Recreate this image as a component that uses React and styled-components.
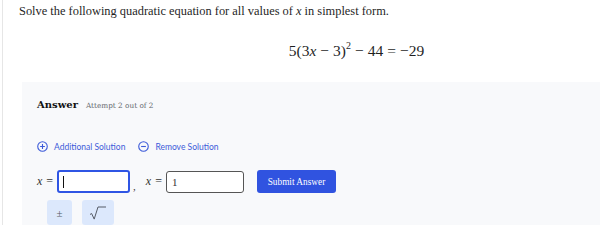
import styled, { createGlobalStyle } from "styled-components";

const GlobalStyle = createGlobalStyle`
  html, body {
    margin: 0;
    padding: 0;
    background: #ffffff;
    overflow: hidden;
  }
`;

function PlusCircle() {
  return (
    <svg width="11" height="11" viewBox="0 0 12 12" fill="none">
      <circle cx="6" cy="6" r="5.2" stroke="#3d5bd9" strokeWidth="1.2" />
      <path d="M6 3.4v5.2M3.4 6h5.2" stroke="#3d5bd9" strokeWidth="1.2" />
    </svg>
  );
}

function MinusCircle() {
  return (
    <svg width="11" height="11" viewBox="0 0 12 12" fill="none">
      <circle cx="6" cy="6" r="5.2" stroke="#3d5bd9" strokeWidth="1.2" />
      <path d="M3.4 6h5.2" stroke="#3d5bd9" strokeWidth="1.2" />
    </svg>
  );
}

function SqrtIcon() {
  return (
    <svg width="18" height="14" viewBox="0 0 18 14" fill="none">
      <path d="M1 8.5l1.6-1 2.6 5.6L9 1h8" stroke="#555b66" strokeWidth="1" />
    </svg>
  );
}

export default function App() {
  return (
    <>
      <GlobalStyle />
      <Page>
        <Question>
          Solve the following quadratic equation for all values of <MathVar>x</MathVar> in simplest form.
        </Question>
        <Equation>
          5(3<MathVar>x</MathVar>
          <Op>−</Op>3)<Sup>2</Sup>
          <Op>−</Op>44<Op>=</Op>−29
        </Equation>
        <Panel>
          <AnswerHead>
            <AnswerTitle>Answer</AnswerTitle>
            <Attempt>Attempt 2 out of 2</Attempt>
          </AnswerHead>
          <Actions>
            <ActionLink>
              <PlusCircle />
              Additional Solution
            </ActionLink>
            <ActionLink>
              <MinusCircle />
              Remove Solution
            </ActionLink>
          </Actions>
          <InputRow>
            <Field>
              <MathLabel><MathVar>x</MathVar><Eq>=</Eq></MathLabel>
              <AnswerBox focused>
                <Caret />
              </AnswerBox>
            </Field>
            <Comma>,</Comma>
            <Field>
              <MathLabel><MathVar>x</MathVar><Eq>=</Eq></MathLabel>
              <AnswerBox>1</AnswerBox>
            </Field>
            <SubmitButton>Submit Answer</SubmitButton>
          </InputRow>
          <KeyRow>
            <KeyButton width="25px">±</KeyButton>
            <KeyButton width="32px"><SqrtIcon /></KeyButton>
          </KeyRow>
        </Panel>
      </Page>
    </>
  );
}

const Page = styled.div`
  margin-left: 2px;
  height: 225px;
  border-left: 1px solid #e6e6e6;
  display: flex;
  flex-direction: column;
  overflow: hidden;
`;

const Question = styled.div`
  padding: 3px 0 0 16px;
  font-family: "Liberation Serif", "Times New Roman", serif;
  font-size: 12.4px;
  line-height: 17px;
  color: #1f1f1f;
`;

const MathVar = styled.i`
  font-family: "Liberation Serif", "Times New Roman", serif;
  font-style: italic;
`;

const Equation = styled.div`
  margin-top: 21px;
  text-align: center;
  padding-left: 110px;
  font-family: "Liberation Serif", "Times New Roman", serif;
  font-size: 15.5px;
  line-height: 20px;
  color: #1f1f1f;
`;

const Op = styled.span`
  font-family: "Liberation Serif", "Times New Roman", serif;
  margin: 0 4px;
`;

const Sup = styled.sup`
  font-size: 10px;
  line-height: 0;
  vertical-align: 7px;
`;

const Panel = styled.div`
  margin: 21px 0 0 19px;
  flex: 1;
  background: #f8f9fb;
  padding: 17px 0 0 15px;
  display: flex;
  flex-direction: column;
`;

const AnswerHead = styled.div`
  display: flex;
  align-items: baseline;
  gap: 8px;
`;

const AnswerTitle = styled.span`
  font-family: "DejaVu Serif", serif;
  font-weight: bold;
  font-size: 10px;
  line-height: 12px;
  color: #111;
`;

const Attempt = styled.span`
  font-family: "DejaVu Serif", serif;
  font-size: 7.3px;
  color: #666a70;
`;

const Actions = styled.div`
  margin-top: 30px;
  height: 11px;
  display: flex;
  gap: 13px;
`;

const ActionLink = styled.span`
  display: inline-flex;
  align-items: center;
  gap: 6px;
  font-family: Lato, "Noto Sans", sans-serif;
  font-size: 8.5px;
  color: #3d5bd9;
`;

const InputRow = styled.div`
  margin-top: 18px;
  display: flex;
  align-items: center;
`;

const Field = styled.div`
  display: flex;
  align-items: center;
`;

const MathLabel = styled.span`
  display: inline-flex;
  align-items: center;
  font-family: "Liberation Serif", serif;
  font-size: 12px;
  color: #333;
  margin-right: 4px;
`;

const Eq = styled.span`
  margin-left: 4px;
`;

const AnswerBox = styled.div`
  box-sizing: border-box;
  width: ${(p) => (p.focused ? "73px" : "78px")};
  height: ${(p) => (p.focused ? "23px" : "22px")};
  border: ${(p) => (p.focused ? "2px solid #2f55e4" : "1px solid #555")};
  border-radius: 3px;
  background: #fff;
  display: flex;
  align-items: center;
  padding-left: ${(p) => (p.focused ? "4px" : "5px")};
  font-family: "Liberation Serif", serif;
  font-size: 11px;
  color: #333;
`;

const Caret = styled.span`
  width: 1px;
  height: 12px;
  background: #111;
`;

const Comma = styled.span`
  font-family: "Liberation Serif", serif;
  font-size: 11px;
  color: #333;
  margin: 8px 10px 0 3px;
`;

const SubmitButton = styled.button`
  margin-left: 13px;
  width: 79px;
  height: 23px;
  border: none;
  border-radius: 3px;
  background: #3053e0;
  color: #fff;
  font-family: "Liberation Serif", serif;
  font-size: 9.3px;
  padding: 0;
`;

const KeyRow = styled.div`
  margin: 7px 0 0 10px;
  display: flex;
  gap: 10px;
`;

const KeyButton = styled.div`
  width: ${(p) => p.width};
  height: 25px;
  border-radius: 3px;
  background: #dce8fc;
  display: flex;
  align-items: center;
  justify-content: center;
  font-family: "Liberation Serif", serif;
  font-size: 11px;
  color: #555b66;
`;
